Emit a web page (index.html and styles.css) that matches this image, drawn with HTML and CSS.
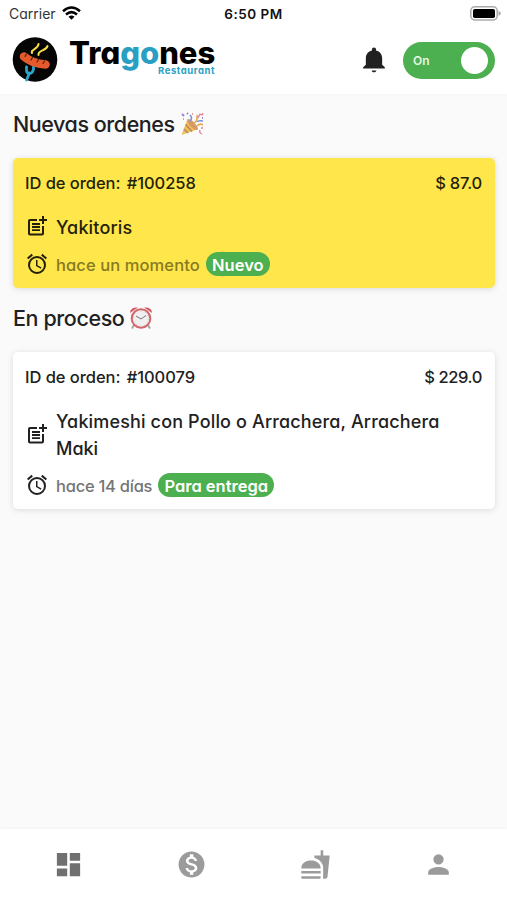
FILE: index.html
```
<!DOCTYPE html>
<html lang="es">
<head>
<meta charset="utf-8">
<meta name="viewport" content="width=device-width, initial-scale=1">
<title>Tragones Restaurant</title>
<link rel="stylesheet" href="styles.css">
</head>
<body>
<svg class="defs" width="0" height="0">
  <symbol id="post-add" viewBox="0 0 24 24"><path d="M17 19.500H5V7h7V5H5C3.900 5 3 5.900 3 7v12.500c0 1.100.900 2 2 2h12c1.100 0 2-.900 2-2V12h-2z"/><path d="M19 2h-2v3h-3v2h3v3h2V7h3V5h-3zM7 9h8v1.900H7zM7 12.100h8V14H7zM7 15.200h8v1.900H7z"/></symbol>
  <symbol id="alarm" viewBox="0 0 24 24"><path d="M22 5.720l-4.600-3.860-1.290 1.530 4.600 3.860L22 5.720zM7.880 3.390L6.600 1.860 2 5.710l1.290 1.530 4.590-3.850zM12.500 8H11v6l4.750 2.850.750-1.230-4-2.370V8zM12 4a9 9 0 1 0 0 18 9 9 0 0 0 0-18zm0 16a7 7 0 1 1 0-14 7 7 0 0 1 0 14z"/></symbol>
</svg>
<div class="app">
  <div class="status">
    <div class="left"><span class="carrier">Carrier</span>
    <svg class="wifi" width="19" height="14" viewBox="0 0 19 14" fill="none" stroke="#000" stroke-width="2.500"><path d="M1 5.300Q9.500-2.300 18 5.300M4 8.500q5.500-4.800 11 0"/><path d="M6.500 10.700q3-2.300 6 0l-3 3z" fill="#000" stroke="none"/></svg></div>
    <span class="time">6:50 PM</span>
    <svg class="battery" width="31" height="15" viewBox="0 0 31 15"><rect x=".8" y=".8" width="26.400" height="13.200" rx="4" fill="#fff" stroke="#aaa" stroke-width="1.500"/><rect x="3" y="3" width="22" height="9" rx="1.800"/><path d="M28.500 4.700q2.300 1 2.300 2.600t-2.300 2.700z" fill="#aaa"/></svg>
  </div>
  <header class="header">
    <svg class="badge" width="46" height="46" viewBox="0 0 46 46">
      <circle cx="23" cy="22.500" r="22.300" fill="#050505"/>
      <path d="M20 16c-2-4 6-3 6.500-9M26.500 18c-1-5 8-4 9-9" fill="none" stroke="#f5df4c" stroke-width="2" stroke-linecap="round"/>
      <path d="M14.500 30v3q0 3.500 3 3.500t4-4.500v-2M17.500 36l-3 7" fill="none" stroke="#2aa5cd" stroke-width="2.800" stroke-linecap="round"/>
      <path d="M12 19.500Q20 26.500 33.500 27.500" fill="none" stroke="#e45a2a" stroke-width="8.600" stroke-linecap="round"/>
      <path d="M14.500 17l-1.500 2.500M20.500 20.500l-1.500 2.500M26.500 22.500l-1.500 2.500M32.500 24l-1.500 2.500" stroke="#481c13" stroke-width="1.100" stroke-linecap="round"/>
    </svg>
    <div class="brand"><div class="name">Tra<span>go</span>nes</div><div class="sub">Restaurant</div></div>
    <svg class="bell" width="28" height="28" viewBox="0 0 24 24" fill="#212121"><path d="M12 22.500c1.100 0 2-.7 2-1.600h-4c0 .9.900 1.600 2 1.600zM19 16v-5.500c0-3.370-1.960-5.990-5.250-6.750V3a1.750 1.750 0 0 0-3.500 0v.750C6.950 4.510 5 7.120 5 10.500V16l-2.300 2.300v1h18.600v-1z"/></svg>
    <div class="toggle"><span>On</span><i></i></div>
  </header>
  <main class="main">
    <h2><span class="h-new">Nuevas ordenes</span>
      <svg width="25" height="25" viewBox="0 0 25 25"><path d="M7 8.500L1.500 23 17 17.500Z" fill="#f0bf55"/><path d="M5.500 12.500l6.500 7M4 17l4 4" stroke="#b58a68" stroke-width="1.600"/><ellipse cx="12.500" cy="12.500" rx="2.600" ry="7.300" transform="rotate(-44 12.500 12.500)" fill="#d59a66"/><path d="M14 11q4-2 3-8M17 14q3-3 6-1" fill="none" stroke="#e8ad4d" stroke-width="1.700"/><path d="M10 9q3-3 0-6M17 10q1-2 6-1" fill="none" stroke="#7b8fe0" stroke-width="1.500"/><path d="M18 6l2-4 2 1 1-2M20 18q-1 3 2 4" fill="none" stroke="#e37c9c" stroke-width="1.300"/><path d="M2 2l2 2M7 1l1 1M22 6h1" stroke="#9a80d6" stroke-width="1.800"/><path d="M3 7h1M12 2h1M21 16h2" stroke="#e87b86" stroke-width="1.600"/></svg>
    </h2>
    <section class="card new">
      <div class="top"><span class="id">ID de orden:&nbsp;<span>#100258</span></span><span class="price p1">$ 87.0</span></div>
      <div class="row item"><svg class="ic"><use href="#post-add"/></svg><div class="dish d1">Yakitoris</div></div>
      <div class="row when"><svg class="ic"><use href="#alarm"/></svg><span class="ago a1">hace un momento</span><span class="pill l1"><b>Nuevo</b></span></div>
    </section>
    <h2 class="second"><span class="h-proc">En proceso</span>
      <svg width="24" height="24" viewBox="0 0 24 24"><path d="M5 19l-2 3.500M19 19l2 3.500" stroke="#a9a2a3" stroke-width="1.800"/><path d="M1 7q0-6 8-5.500zM23 7q0-6-8-5.500z" fill="#d45a60"/><circle cx="12" cy="12.500" r="9.300" fill="#f1efef" stroke="#d4656b" stroke-width="2"/><circle cx="12" cy="12.500" r="7.600" fill="none" stroke="#bbb7b8" stroke-width=".8" stroke-dasharray="1 3"/><path d="M7 10l5 3 5-3.500" fill="none" stroke="#777" stroke-width="1"/></svg>
    </h2>
    <section class="card">
      <div class="top"><span class="id">ID de orden:&nbsp;<span>#100079</span></span><span class="price p2">$ 229.0</span></div>
      <div class="row item"><svg class="ic"><use href="#post-add"/></svg><div class="dish d2">Yakimeshi con Pollo o Arrachera, Arrachera<br><span class="maki">Maki</span></div></div>
      <div class="row when"><svg class="ic"><use href="#alarm"/></svg><span class="ago a2">hace 14 días</span><span class="pill l2"><b>Para entrega</b></span></div>
    </section>
  </main>
  <nav class="nav">
    <svg class="on" viewBox="0 0 24 24"><path d="M3 13h8V3H3v10zm0 8h8v-6H3v6zm10 0h8V11h-8v10zm0-18v6h8V3h-8z"/></svg>
    <svg viewBox="0 0 24 24"><path d="M12 2a10 10 0 1 0 0 20 10 10 0 0 0 0-20zm1.410 16.090V20h-2.670v-1.930c-1.710-.360-3.160-1.460-3.270-3.400h1.960c.100 1.050.820 1.870 2.650 1.870 1.960 0 2.400-.980 2.400-1.590 0-.830-.440-1.610-2.670-2.140-2.480-.600-4.180-1.620-4.180-3.670 0-1.720 1.390-2.840 3.110-3.210V4h2.670v1.950c1.860.450 2.790 1.860 2.850 3.390H14.300c-.050-1.110-.640-1.870-2.220-1.870-1.500 0-2.400.680-2.400 1.640 0 .840.650 1.390 2.670 1.910s4.180 1.390 4.180 3.910c-.010 1.830-1.380 2.830-3.120 3.160z"/></svg>
    <svg class="food" viewBox="0 0 24 24"><path d="M1 21.980c0 .560.450 1.010 1.010 1.010H15c.560 0 1.010-.450 1.010-1.010V21H1v.980zM8.500 8.990C4.750 8.990 1 11 1 15h15c0-4-3.750-6.010-7.500-6.010zM1 17h15v2H1zM18 5V1h-2v4h-5l.230 2c1.710.470 3.310 1.320 4.270 2.260 1.440 1.420 2.430 2.890 2.430 5.290V23h1.720c.840 0 1.530-.650 1.630-1.470L23 5h-5z"/></svg>
    <svg viewBox="0 0 24 24"><path d="M12 12a4 4 0 1 0 0-8 4 4 0 0 0 0 8zm0 2c-2.670 0-8 1.340-8 4v2h16v-2c0-2.660-5.330-4-8-4z"/></svg>
  </nav>
</div>
</body>
</html>
```

FILE: styles.css
```
* { box-sizing: border-box; }
body { margin: 0; background: #fafafa; color: #212121; font-family: Inter, "Liberation Sans", sans-serif; font-feature-settings: "cv11"; font-weight: 500; }
.defs { position: absolute; }
svg { display: block; flex: none; }
.app { height: 900px; display: flex; flex-direction: column; overflow: hidden; }
.status { height: 27px; background: #fff; display: grid; grid-template-columns: 1fr auto 1fr; align-items: center; padding: 0 6px 0 9px; color: #111; }
.left { display: flex; align-items: center; gap: 6px; }
.carrier { font-size: 14px; font-weight: 400; color: #333; }
.wifi { margin-top: -1px; }
.battery { justify-self: end; margin-top: -1px; }
.time { font-size: 13.500px; font-weight: 600; letter-spacing: .5px; margin-left: -3px; white-space: nowrap; }
.header { height: 67px; background: #fff; display: flex; align-items: center; padding: 0 12px; box-shadow: 0 1px 2px rgba(0,0,0,.02); }
.badge { margin-top: -1px; }
.brand { margin-left: 11px; width: 147px; height: 46px; margin-top: -4px; }
.name { color: #000; font-size: 31px; line-height: 34px; font-weight: 800; letter-spacing: 0; white-space: nowrap; }
.name span, .sub { color: #2a9fc4; }
.sub { font-size: 9.500px; line-height: 10px; font-weight: 700; text-align: right; margin-top: -4px; padding-right: 1px; letter-spacing: .55px; }
.bell { margin-left: auto; margin-top: -1px; }
.toggle { width: 92px; height: 37px; border-radius: 19px; background: #4caf50; margin: -1px 0 0 15px; display: flex; align-items: center; justify-content: space-between; padding: 0 7px 0 10px; color: #e4f5e4; font-size: 12px; font-weight: 600; }
.toggle i { width: 27px; height: 27px; border-radius: 50%; background: #fff; }
.main { flex: 1; padding: 14px 12px 0 13px; }
h2 { margin: 0; height: 32px; display: flex; align-items: center; gap: 5px; font-size: 21.500px; font-weight: 500; line-height: 32px; white-space: nowrap; letter-spacing: -.45px; }
h2.second { margin-top: 14px; letter-spacing: -.4px; }
.card { margin-top: 18px; background: #fff; border-radius: 5px; padding: 13px; box-shadow: 0 1px 6px rgba(0,0,0,.13); height: 157px; }
.card.new { height: 130px; background: #ffe64b; color: #241f08; }
.top { height: 24px; display: flex; justify-content: space-between; align-items: center; font-size: 16.500px; white-space: nowrap; }
.id { letter-spacing: -.05px; margin-left: -1px; }
.id span { margin-left: 2px; }
.price { letter-spacing: -.2px; }
.p2 { letter-spacing: -.4px; }
.row { display: flex; align-items: center; }
.item { margin-top: 19px; }
.item .ic { margin: -3px 0 0 -1px; }
.ic { width: 24px; height: 24px; fill: currentColor; }
.dish { margin-left: 7px; font-size: 18px; line-height: 27px; white-space: nowrap; letter-spacing: .15px; }
.maki { letter-spacing: 0; }
.when { height: 24px; margin-top: 10px; }
.when .ic { margin: 1px 0 0 -1px; }
.ago { margin: 3px 0 0 7px; font-size: 16.500px; color: #757575; white-space: nowrap; letter-spacing: .1px; }
.a2 { letter-spacing: -.25px; }
.new .ago { color: #877a22; }
.pill { height: 24px; margin: 1px 0 0 6px; border-radius: 12px; background: #4caf50; color: #fff; display: flex; align-items: center; justify-content: center; font-size: 16.500px; white-space: nowrap; }
.pill b { font-weight: 600; margin-top: 2px; }
.l1 { width: 64px; }
.l2 { width: 116px; }
.nav { height: 71px; background: #fff; display: grid; grid-template-columns: repeat(4, 123.500px); justify-content: center; justify-items: center; padding-top: 20px; box-shadow: 0 -1px 2px rgba(0,0,0,.03); }
.nav svg { width: 31px; height: 31px; fill: #9b9b9b; }
.nav .on { fill: #707070; }
```
